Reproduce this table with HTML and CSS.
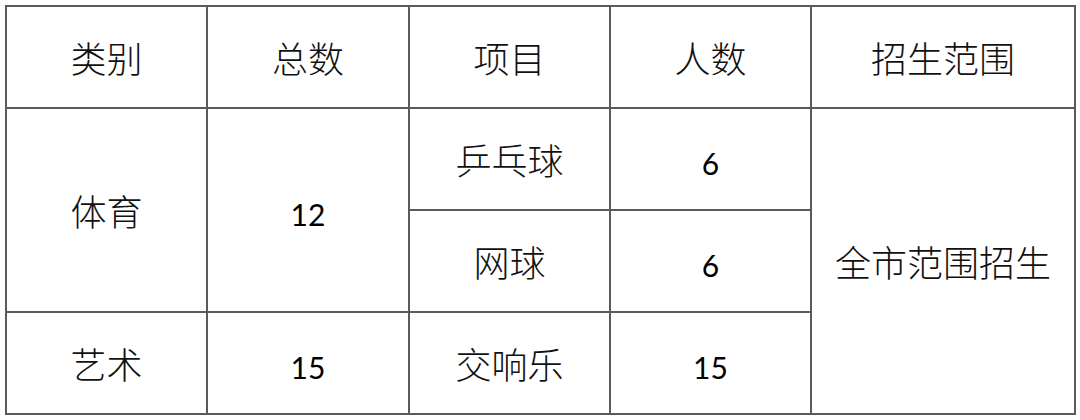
FILE: index.html
```html
<!DOCTYPE html>
<html lang="zh-CN">
<head>
<meta charset="utf-8">
<link rel="stylesheet" href="styles.css">
</head>
<body>
<div class="page">
<table class="grid">
  <colgroup>
    <col class="c1"><col class="c2"><col class="c3"><col class="c4"><col class="c5">
  </colgroup>
  <tr class="head">
    <td>类别</td><td>总数</td><td>项目</td><td>人数</td><td>招生范围</td>
  </tr>
  <tr>
    <td rowspan="2">体育</td>
    <td rowspan="2"><span class="num">12</span></td>
    <td>乒乓球</td>
    <td><span class="num">6</span></td>
    <td rowspan="3">全市范围招生</td>
  </tr>
  <tr>
    <td>网球</td>
    <td><span class="num">6</span></td>
  </tr>
  <tr>
    <td>艺术</td>
    <td><span class="num">15</span></td>
    <td>交响乐</td>
    <td><span class="num">15</span></td>
  </tr>
</table>
</div>
</body>
</html>
```
FILE: styles.css
```css
html, body {
  margin: 0;
  padding: 0;
  background: #ffffff;
}
.page {
  padding: 5px 0 0 5px;
}
.grid {
  border-collapse: collapse;
  table-layout: fixed;
  width: 1071px;
  font-family: "Noto Sans CJK SC", "Noto Sans", sans-serif;
  font-size: 36px;
  font-weight: 300;
  color: #111111;
}
.c1 { width: 201px; }
.c2 { width: 202px; }
.c3 { width: 201px; }
.c4 { width: 201px; }
.c5 { width: 264px; }
.grid td {
  border: 2px solid #5a5a5a;
  height: 100px;
  padding: 0;
  text-align: center;
  vertical-align: middle;
  line-height: 1;
}
.num {
  font-family: "Lato", "Open Sans", sans-serif;
  font-weight: 400;
  font-size: 30px;
  color: #000000;
}
```
